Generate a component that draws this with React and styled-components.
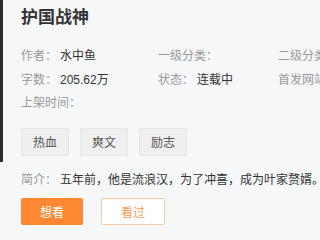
import styled, { createGlobalStyle } from "styled-components";

const GlobalStyle = createGlobalStyle`
    html, body {
        margin: 0;
        padding: 0;
        background: #f6f7f9;
        overflow: hidden;
    }
    body {
        font-family: "Liberation Sans", "Noto Sans CJK SC", sans-serif;
    }
`;

const info = [
    [
        { label: "作者：", value: "水中鱼" },
        { label: "一级分类：", value: "" },
        { label: "二级分类：", value: "" },
    ],
    [
        { label: "字数：", value: "205.62万" },
        { label: "状态：", value: "连载中" },
        { label: "首发网站：", value: "" },
    ],
    [{ label: "上架时间：", value: "" }],
];

const tags = ["热血", "爽文", "励志"];

const App = () => {
    return (
        <>
            <GlobalStyle />
            <Page>
                <Cover />
                <Detail>
                    <Title>护国战神</Title>
                    <InfoList>
                        {info.map((row, i) => (
                            <InfoRow key={i}>
                                {row.map((item) => (
                                    <InfoItem key={item.label}>
                                        <Label>{item.label}</Label>
                                        <Value>{item.value}</Value>
                                    </InfoItem>
                                ))}
                            </InfoRow>
                        ))}
                    </InfoList>
                    <Tags>
                        {tags.map((t) => (
                            <Tag key={t}>{t}</Tag>
                        ))}
                    </Tags>
                    <Intro>
                        <Label>简介：</Label>
                        <IntroText>五年前，他是流浪汉，为了冲喜，成为叶家赘婿。五年后，他是北境战神，统领百万雄师。</IntroText>
                    </Intro>
                    <Buttons>
                        <Button primary>想看</Button>
                        <Button>看过</Button>
                    </Buttons>
                </Detail>
            </Page>
        </>
    );
};

export default App;

const Page = styled.div`
    display: flex;
    align-items: flex-start;
    width: 320px;
    height: 240px;
    overflow: hidden;
`;

const Cover = styled.div`
    flex: 0 0 3px;
    height: 162px;
    background: #2b2b2b;
`;

const Detail = styled.div`
    flex: 1;
    min-width: 0;
    padding: 6px 0 0 18px;
    display: flex;
    flex-direction: column;
`;

const Title = styled.div`
    font-size: 17px;
    font-weight: bold;
    color: #333;
    line-height: 24px;
    height: 24px;
`;

const InfoList = styled.div`
    margin-top: 13px;
    display: flex;
    flex-direction: column;
`;

const InfoRow = styled.div`
    display: grid;
    grid-template-columns: 137px 120px 140px;
    height: 23.5px;
    align-items: center;
`;

const InfoItem = styled.div`
    display: flex;
    white-space: nowrap;
    font-size: 12px;
`;

const Label = styled.span`
    color: #999;
    min-width: 39px;
    flex-shrink: 0;
`;

const Value = styled.span`
    color: #333;
`;

const Tags = styled.div`
    margin-top: 14px;
    display: flex;
    gap: 11px;
`;

const Tag = styled.div`
    width: 46px;
    height: 26px;
    border: 1px solid #e6e6e6;
    background: #efefef;
    color: #555;
    font-size: 12px;
    display: flex;
    align-items: center;
    justify-content: center;
`;

const Intro = styled.div`
    margin-top: 14px;
    display: flex;
    font-size: 12px;
    white-space: nowrap;
    overflow: hidden;
    line-height: 20px;
`;

const IntroText = styled.span`
    color: #333;
`;

const Buttons = styled.div`
    margin-top: 8px;
    display: flex;
    gap: 18px;
`;

const Button = styled.div`
    width: ${(p) => (p.primary ? "62px" : "62px")};
    height: ${(p) => (p.primary ? "27px" : "25px")};
    border: ${(p) => (p.primary ? "none" : "1px solid #f6c9a6")};
    background: ${(p) => (p.primary ? "#fd8732" : "#fff")};
    color: ${(p) => (p.primary ? "#fff" : "#f59a55")};
    font-size: 12px;
    border-radius: 2px;
    display: flex;
    align-items: center;
    justify-content: center;
`;
